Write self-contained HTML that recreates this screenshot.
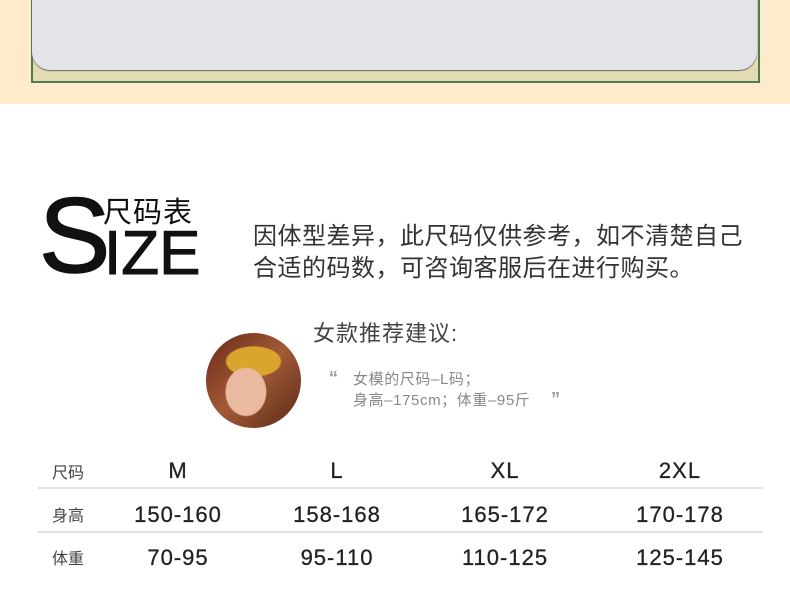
<!DOCTYPE html>
<html><head><meta charset="utf-8"><style>
*{margin:0;padding:0;box-sizing:border-box}
body{width:790px;height:599px;background:#fff;position:relative;overflow:hidden;font-family:"Liberation Sans","Noto Sans CJK SC",sans-serif;color:#333}
.a{position:absolute;white-space:nowrap}
.top{position:absolute;left:0;top:0;width:790px;height:104px;background:#feebcb}
.olive{position:absolute;left:31px;top:-2px;width:729px;height:85px;background:#e3dcb2;border:2px solid #4d7a52;border-top:none}
.gray{position:absolute;left:32px;top:-2px;width:725px;height:72px;background:#e3e4e8;border-radius:0 0 18px 18px;box-shadow:0 1px 1px #666}
.line{position:absolute;left:38px;width:725px;height:2px;background:#e2e2e2}
.t{position:absolute;font-size:22px;letter-spacing:1px;color:#222;transform:translateX(-50%);-webkit-text-stroke:0.3px #222}
.lab{position:absolute;left:52px;font-size:16px;color:#444}
</style></head><body>
<div class="top"><div class="olive"></div><div class="gray"></div></div>

<div class="a" style="left:39px;top:182px;font-size:107px;line-height:107px;color:#111;-webkit-text-stroke:1.5px #111">S</div>
<div class="a" style="left:104px;top:223px;font-size:62px;line-height:62px;color:#111;letter-spacing:0px;-webkit-text-stroke:1px #111">IZE</div>
<div class="a" style="left:103px;top:197px;font-size:29px;line-height:32px;color:#111;letter-spacing:1px">尺码表</div>

<div class="a" style="left:253px;top:221px;font-size:24px;line-height:32px;color:#333;letter-spacing:0.5px">因体型差异，此尺码仅供参考，如不清楚自己<br>合适的码数，可咨询客服后在进行购买。</div>

<div class="a" style="left:313px;top:316px;font-size:22px;color:#444;letter-spacing:1px">女款推荐建议:</div>

<div class="a" style="left:206px;top:333px;width:95px;height:95px;border-radius:50%;overflow:hidden;background:radial-gradient(ellipse 22% 26% at 42% 62%,#e9b9a0 0 95%,transparent 100%),radial-gradient(ellipse 40% 22% at 50% 30%,#d9a52c 0 70%,transparent 75%),linear-gradient(135deg,#6a2a18,#a25a35 50%,#5a2a1a)"></div>

<div class="a" style="left:329px;top:368px;font-size:18px;color:#999;font-weight:bold">“</div>
<div class="a" style="left:353px;top:369px;font-size:15px;line-height:21px;color:#888;letter-spacing:0.6px">女模的尺码–L码；<br>身高–175cm；体重–95斤</div>
<div class="a" style="left:551px;top:389px;font-size:18px;color:#999;font-weight:bold">”</div>

<div class="lab" style="top:459px">尺码</div>
<div class="t" style="left:178px;top:458px">M</div>
<div class="t" style="left:337px;top:458px">L</div>
<div class="t" style="left:505px;top:458px">XL</div>
<div class="t" style="left:680px;top:458px">2XL</div>
<div class="line" style="top:487px"></div>
<div class="lab" style="top:502px">身高</div>
<div class="t" style="left:178px;top:502px">150-160</div>
<div class="t" style="left:337px;top:502px">158-168</div>
<div class="t" style="left:505px;top:502px">165-172</div>
<div class="t" style="left:680px;top:502px">170-178</div>
<div class="line" style="top:531px"></div>
<div class="lab" style="top:545px">体重</div>
<div class="t" style="left:178px;top:545px">70-95</div>
<div class="t" style="left:337px;top:545px">95-110</div>
<div class="t" style="left:505px;top:545px">110-125</div>
<div class="t" style="left:680px;top:545px">125-145</div>
</body></html>
